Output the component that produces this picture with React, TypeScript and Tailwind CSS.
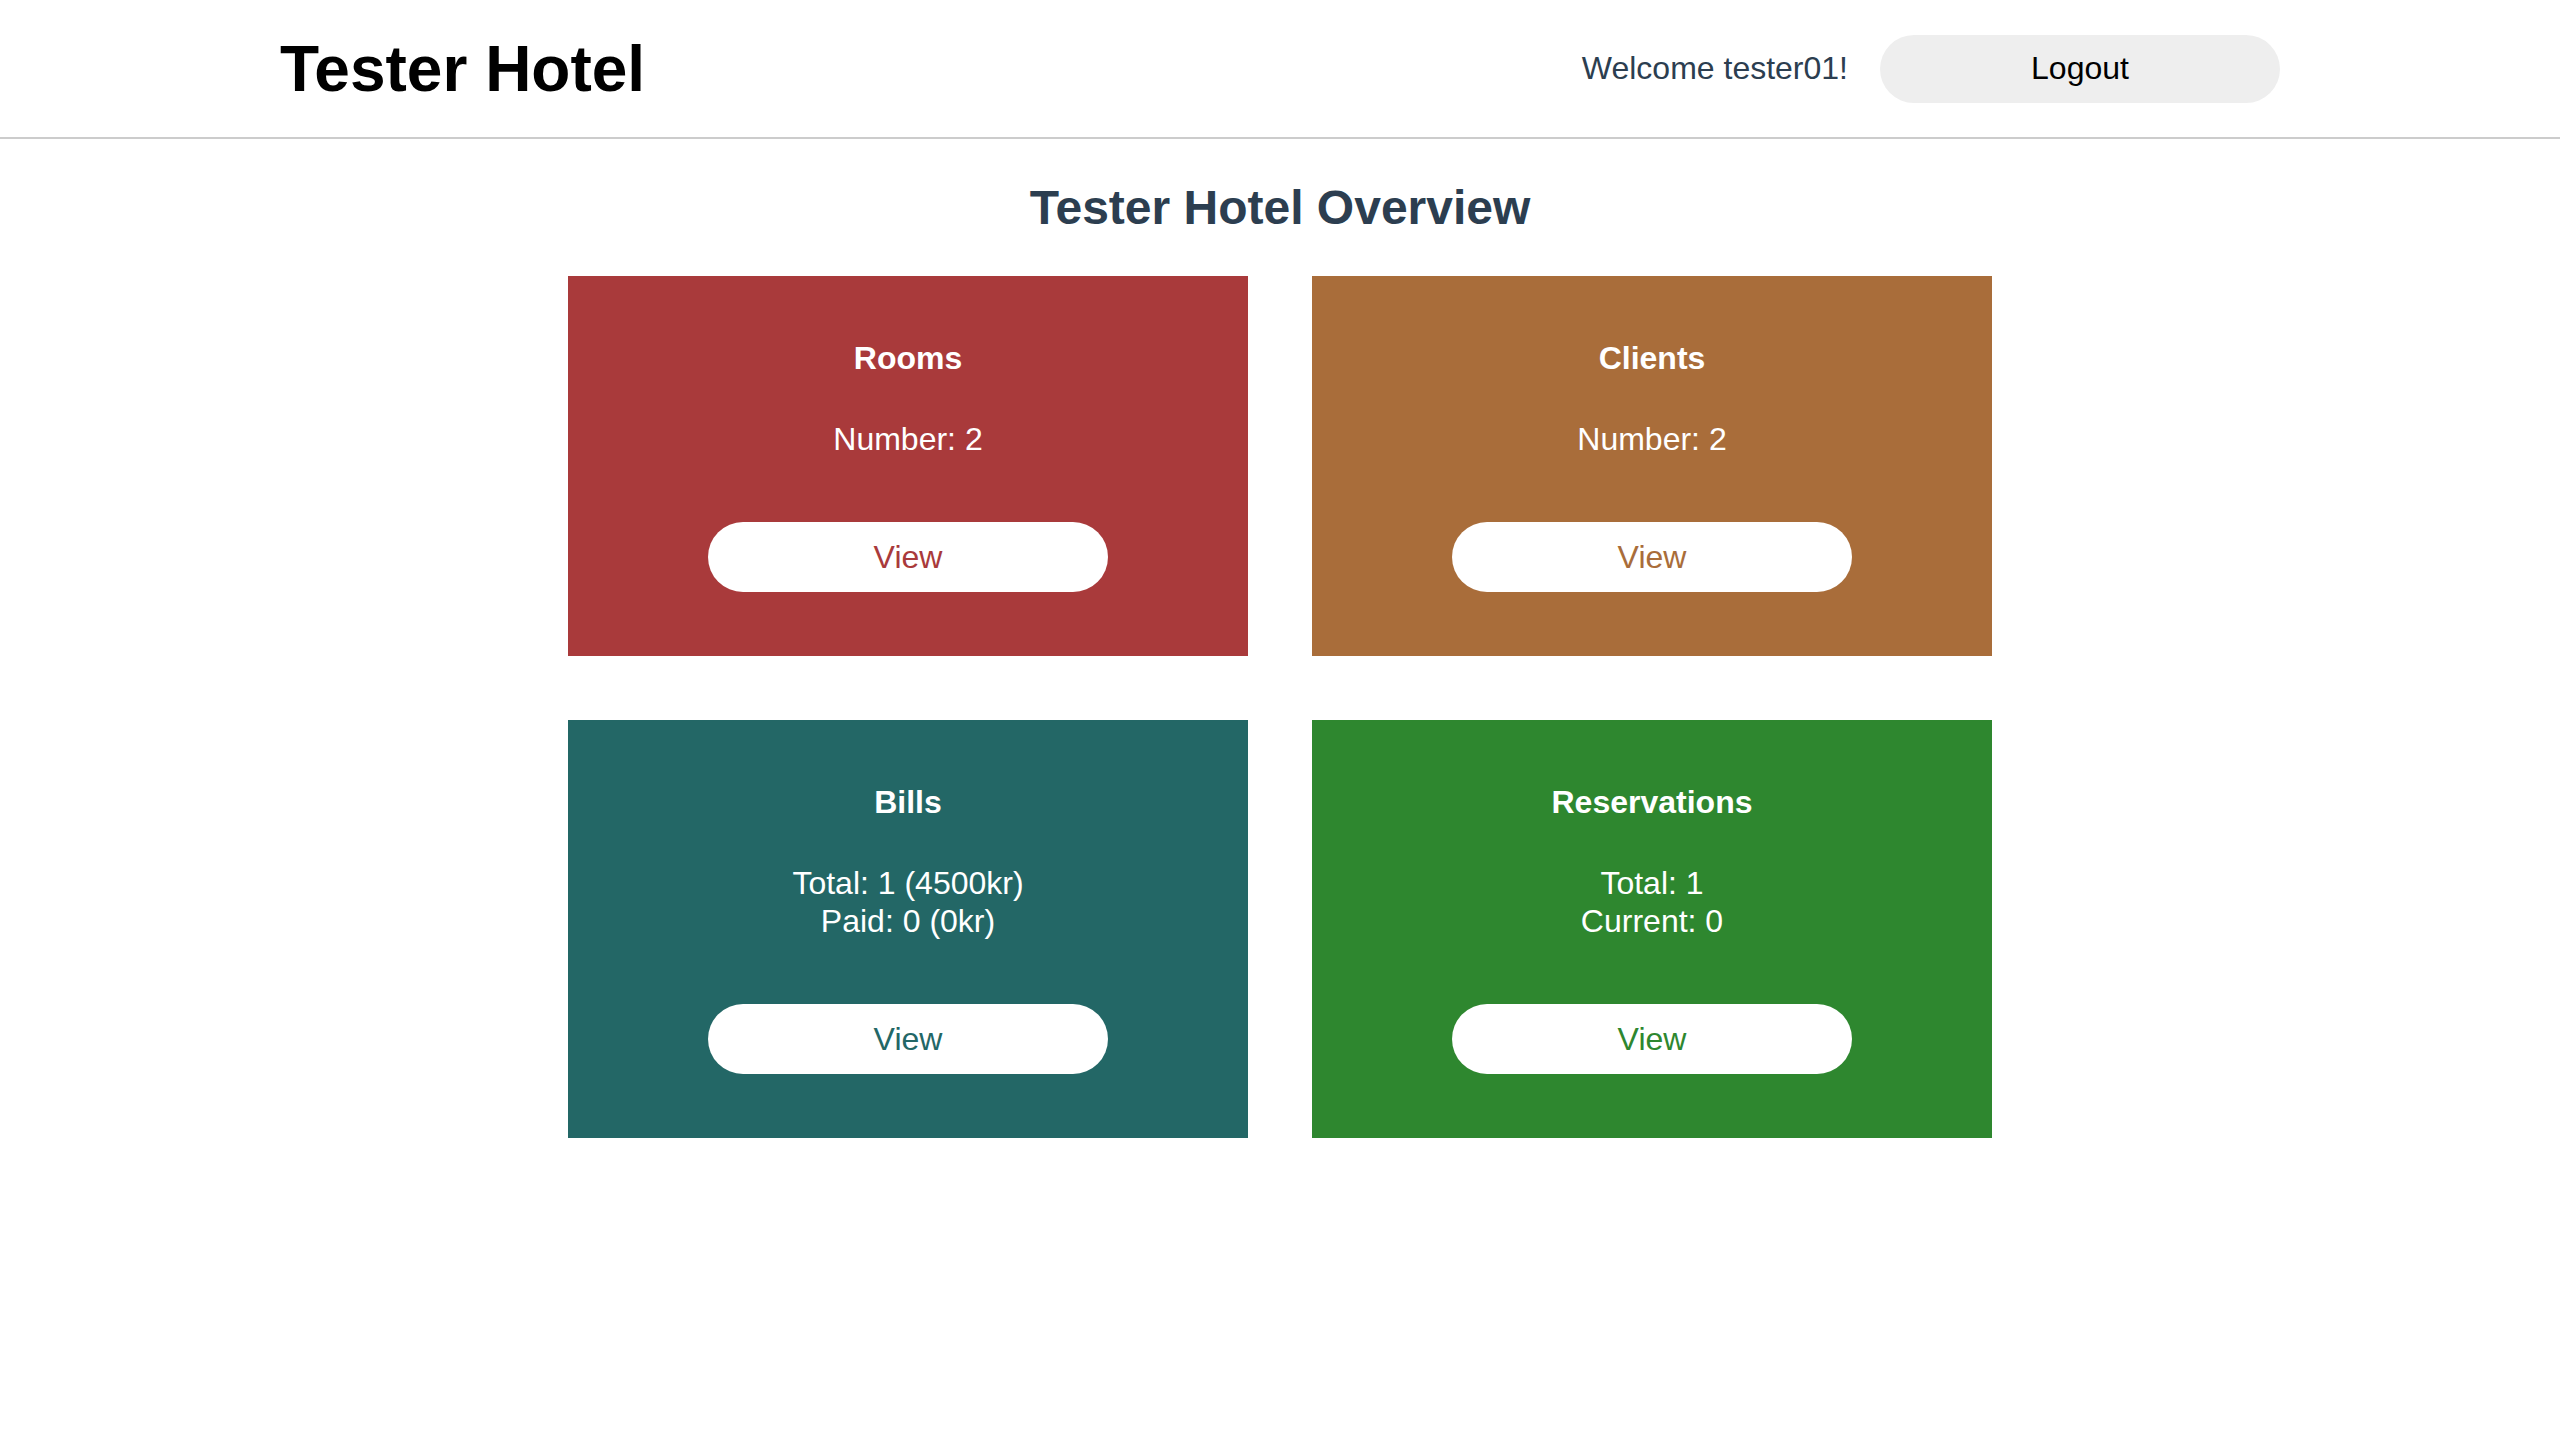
const cards = [
  {
    title: 'Rooms',
    lines: ['Number: 2'],
    bg: 'bg-[#a93a3b]',
    text: 'text-[#a93a3b]',
  },
  {
    title: 'Clients',
    lines: ['Number: 2'],
    bg: 'bg-[#a96d3a]',
    text: 'text-[#a96d3a]',
  },
  {
    title: 'Bills',
    lines: ['Total: 1 (4500kr)', 'Paid: 0 (0kr)'],
    bg: 'bg-[#236766]',
    text: 'text-[#236766]',
  },
  {
    title: 'Reservations',
    lines: ['Total: 1', 'Current: 0'],
    bg: 'bg-[#2e872f]',
    text: 'text-[#2e872f]',
  },
];

export default function App() {
  return (
    <div className="min-h-screen w-full bg-white font-['Liberation_Sans',Arial,sans-serif]">
      {/* Header */}
      <header className="border-b-2 border-[#cccccc]">
        <div className="mx-auto flex h-[137px] w-[2000px] items-center justify-between">
          <h1 className="text-[64px] font-bold leading-[74px] text-black">Tester Hotel</h1>
          <div className="flex items-center gap-8">
            <span className="text-[32px] leading-[37px] text-[#2c3e50]">Welcome tester01!</span>
            <button className="h-[68px] w-[400px] cursor-pointer rounded-full bg-[#eeeeee] text-[32px] leading-[37px] text-black">
              Logout
            </button>
          </div>
        </div>
      </header>

      {/* Overview */}
      <main className="flex flex-col items-center">
        <h2 className="mt-[41px] mb-[41px] text-[48px] font-bold leading-[55px] text-[#2c3e50]">
          Tester Hotel Overview
        </h2>
        <div className="grid grid-cols-[680px_680px] gap-16">
          {cards.map((c) => (
            <div key={c.title} className={`flex flex-col items-center p-16 text-white ${c.bg}`}>
              <h3 className="text-[32px] font-bold leading-[37px]">{c.title}</h3>
              <div className="mt-[43px] text-center text-[32px] leading-[38px]">
                {c.lines.map((l) => (
                  <p key={l}>{l}</p>
                ))}
              </div>
              <button
                className={`mt-16 h-[70px] w-[400px] cursor-pointer rounded-full bg-white text-[32px] leading-[37px] ${c.text}`}
              >
                View
              </button>
            </div>
          ))}
        </div>
      </main>
    </div>
  );
}
